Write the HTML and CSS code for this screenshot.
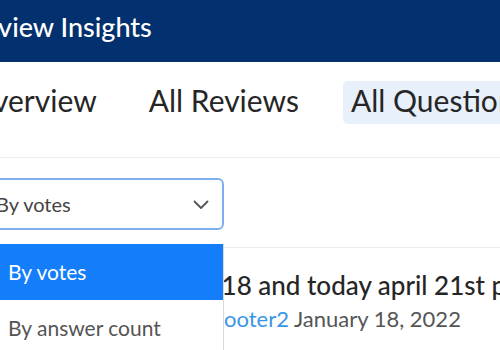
FILE: index.html
```html
<!DOCTYPE html>
<html lang="en">

<head>
    <meta charset="UTF-8">
    <meta name="viewport" content="width=device-width, initial-scale=1.0">
    <title>Review Insights</title>
    <link rel="stylesheet" href="styles.css">
</head>

<body>
    <div class="page">
        <header class="topbar">
            <h1>Review Insights</h1>
        </header>

        <nav class="tabs">
            <a class="tab" href="#">Overview</a>
            <a class="tab" href="#">All Reviews</a>
            <a class="tab active" href="#">All Questions</a>
        </nav>

        <section class="questions">
            <div class="sort">
                <div class="select">
                    <span>By votes</span>
                    <svg class="chevron" width="16" height="10" viewBox="0 0 16 10">
                        <polyline points="1.5,1.5 8,8 14.5,1.5" fill="none" stroke="#555" stroke-width="1.8"
                            stroke-linecap="round" stroke-linejoin="round" />
                    </svg>
                </div>
                <ul class="menu">
                    <li class="option selected">By votes</li>
                    <li class="option">By answer count</li>
                </ul>
            </div>

            <article class="question">
                <h2>Question asked january 18 and today april 21st posted again</h2>
                <p class="meta">Asked by the user qa.tester.scooter2 <span class="date">January 18, 2022</span></p>
            </article>
        </section>
    </div>
</body>

</html>
```

FILE: styles.css
```css
body {
    margin: 0;
    font-family: Lato, "Open Sans", sans-serif;
    background-color: #fff;
}

.page {
    margin-left: -48px;
    width: 548px;
    height: 350px;
    overflow: hidden;
}

.topbar {
    background-color: #03306e;
    height: 62px;
    display: flex;
    align-items: center;
    padding-left: 16px;
}

.topbar h1 {
    margin: 0 0 10px;
    color: #fff;
    font-size: 27px;
    font-weight: 500;
}

.tabs {
    display: flex;
    gap: 36px;
    padding: 19px 0 33px 9px;
    border-bottom: 1px solid #ececec;
}

.tab {
    padding: 0 8px 4px;
    line-height: 39px;
    font-size: 30px;
    color: #262626;
    text-decoration: none;
    white-space: nowrap;
    border-radius: 5px;
}

.tab.active {
    background-color: #e7f0fb;
}

.questions {
    padding-top: 20px;
}

.sort {
    position: relative;
    padding-left: 30px;
}

.select {
    width: 242px;
    height: 52px;
    box-sizing: border-box;
    border: 2px solid #7db0ec;
    border-radius: 6px;
    display: flex;
    align-items: center;
    justify-content: space-between;
    padding: 0 13px 0 12px;
    font-size: 20px;
    color: #444;
}

.chevron {
    margin-top: 2px;
}

.menu {
    position: absolute;
    top: 66px;
    left: 30px;
    width: 241px;
    margin: 0;
    padding: 0;
    list-style: none;
    background-color: #fff;
    border-right: 1px solid #d9d9d9;
    z-index: 2;
}

.option {
    height: 56px;
    line-height: 56px;
    padding-left: 26px;
    font-size: 21px;
    color: #555;
}

.option.selected {
    background-color: #137dfa;
    color: #fff;
}

.question {
    margin-top: 17px;
    border-top: 1px solid #ececec;
    padding: 21px 0 0;
    white-space: nowrap;
}

.question h2 {
    margin: 0 0 0 -5px;
    font-size: 26px;
    font-weight: 500;
    color: #262626;
}

.meta {
    margin: 4px 0 0 -14px;
    font-size: 22px;
    color: #3b95e6;
}

.date {
    color: #555;
}
```
